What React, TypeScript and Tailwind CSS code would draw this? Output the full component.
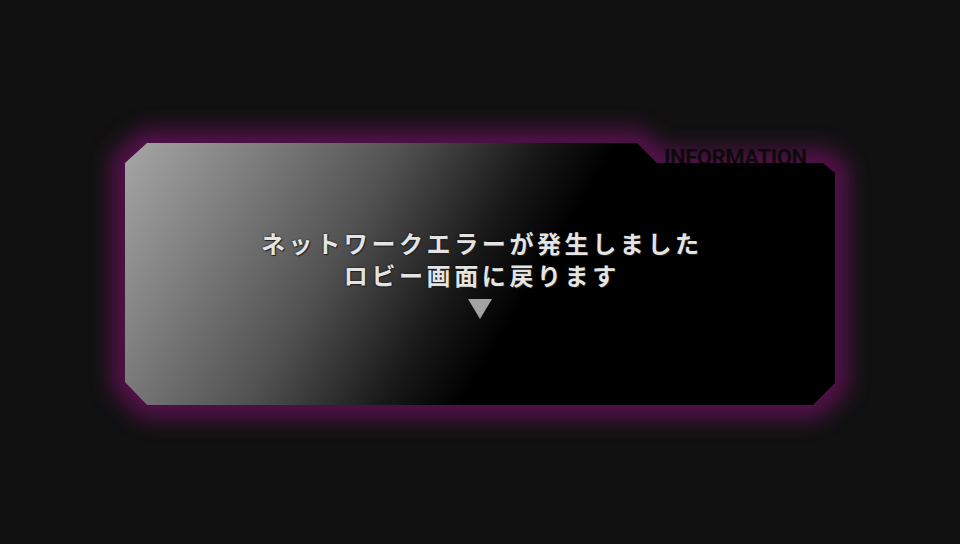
import React from 'react';

// chamfered frame outline for the 710x262 panel
const FRAME_CLIP =
  '[clip-path:polygon(0_20px,22px_0,512px_0,532px_20px,698px_20px,710px_30px,710px_240px,688px_262px,22px_262px,0_239px)]';

// same outline grown by 14px on every side (738x290), blurred into a halo
const HALO_CLIP =
  '[clip-path:polygon(0_28px,30px_0,532px_0,552px_20px,718px_20px,738px_38px,738px_260px,708px_290px,30px_290px,0_259px)]';

const DialogFrame: React.FC<{ lines: string[] }> = ({ lines }) => {
  return (
    <div className="relative w-[710px] h-[262px] mt-[4px]">
      <div className="absolute -inset-[14px] blur-[10px]">
        <div className={`w-full h-full bg-[#521149] ${HALO_CLIP}`} />
      </div>

      <div className="absolute left-[539px] top-[3px] h-[17px] overflow-hidden">
        <span className="block text-[22px] leading-[24px] font-bold tracking-[-0.4px] text-[#0b0b0b] [font-family:Roboto,'Liberation_Sans',sans-serif]">
          INFORMATION
        </span>
      </div>

      <div
        className={`relative w-full h-full ${FRAME_CLIP} bg-[linear-gradient(121deg,#a6a6a6_0%,#7d7d7d_16%,#525252_32%,#181818_48%,#000_57%)]`}
      >
        <div className="flex flex-col items-center pt-[84px] [font-family:'Noto_Sans_CJK_JP',sans-serif]">
          {lines.map((line) => (
            <p
              key={line}
              className="text-[24px] leading-[32px] font-bold tracking-[3.6px] pl-[3.6px] text-[#e4e4e4] [text-shadow:1px_1px_0_#222,0_0_2px_#000]"
            >
              {line}
            </p>
          ))}
          <svg width="26" height="22" viewBox="0 0 26 22" className="mt-[7px]">
            <polygon points="1,1 25,1 13,21" fill="#a3a3a3" />
          </svg>
        </div>
      </div>
    </div>
  );
};

export default function App() {
  return (
    <div className="w-[960px] h-[544px] bg-[#111111] flex items-center justify-center overflow-hidden">
      <DialogFrame lines={['ネットワークエラーが発生しました', 'ロビー画面に戻ります']} />
    </div>
  );
}
